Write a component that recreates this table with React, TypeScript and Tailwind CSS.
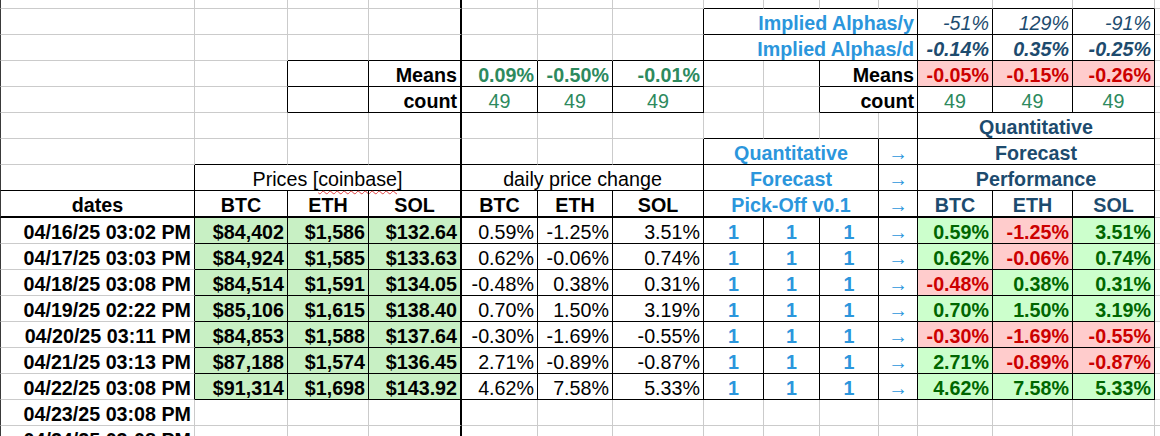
import React from "react";

type Cell = { c: number; cs?: number; t?: React.ReactNode; k?: string; a?: "l" | "c" | "r" };

const SPAN: Record<number, string> = { 1: "", 2: "col-span-2", 3: "col-span-3", 4: "col-span-4" };

const V: Record<number, [number, number][]> = {
  0: [[7, 15]],
  1: [[3, 4], [8, 15]],
  2: [[3, 4], [8, 15]],
  3: [[0, 17]],
  4: [[3, 4], [8, 15]],
  5: [[3, 4], [8, 15]],
  6: [[1, 4], [6, 15]],
  7: [[9, 15]],
  8: [[3, 4], [9, 15]],
  9: [[6, 15]],
  10: [[1, 15]],
  11: [[1, 4], [8, 15]],
  12: [[1, 4], [8, 15]],
  13: [[1, 15]],
};

const H: Record<number, [number, number][]> = {
  0: [[7, 13]],
  1: [[7, 13]],
  2: [[2, 13]],
  3: [[2, 6], [9, 13]],
  4: [[2, 6], [9, 13]],
  5: [[7, 13]],
  6: [[1, 13]],
  7: [[0, 13]],
  8: [[0, 13]],
  9: [[1, 13]],
  10: [[1, 13]],
  11: [[1, 13]],
  12: [[1, 13]],
  13: [[1, 13]],
  14: [[1, 13]],
  15: [[1, 13]],
};

const inR = (v: number, ranges?: [number, number][]) =>
  !!ranges && ranges.some(([a, b]) => v >= a && v <= b);

const BLUE = "text-[#2b96dc] font-bold";
const NAVY = "text-[#1d4b6e] font-bold";
const MGREEN = "text-[#2d8a5e]";
const ARROW = "text-[#2b96dc]";

const dates = [
  "04/16/25 03:02 PM",
  "04/17/25 03:03 PM",
  "04/18/25 03:08 PM",
  "04/19/25 02:22 PM",
  "04/20/25 03:11 PM",
  "04/21/25 03:13 PM",
  "04/22/25 03:08 PM",
];
const btc = ["$84,402", "$84,924", "$84,514", "$85,106", "$84,853", "$87,188", "$91,314"];
const eth = ["$1,586", "$1,585", "$1,591", "$1,615", "$1,588", "$1,574", "$1,698"];
const sol = ["$132.64", "$133.63", "$134.05", "$138.40", "$137.64", "$136.45", "$143.92"];
const dB = ["0.59%", "0.62%", "-0.48%", "0.70%", "-0.30%", "2.71%", "4.62%"];
const dE = ["-1.25%", "-0.06%", "0.38%", "1.50%", "-1.69%", "-0.89%", "7.58%"];
const dS = ["3.51%", "0.74%", "0.31%", "3.19%", "-0.55%", "-0.87%", "5.33%"];

const perf = (v: string) =>
  v.startsWith("-")
    ? "bg-[#ffcccc] text-[#cc0000] font-bold"
    : "bg-[#ccffcc] text-[#006600] font-bold";

const PRICE = "bg-[#c8f0c4] font-bold text-black";

const rowDefs: Record<number, Cell[]> = {
  1: [
    { c: 7, cs: 4, t: "Implied Alphas/y", k: BLUE, a: "r" },
    { c: 11, t: "-51%", k: "text-[#1d4b6e] italic", a: "r" },
    { c: 12, t: "129%", k: "text-[#1d4b6e] italic", a: "r" },
    { c: 13, t: "-91%", k: "text-[#1d4b6e] italic", a: "r" },
  ],
  2: [
    { c: 7, cs: 4, t: "Implied Alphas/d", k: BLUE, a: "r" },
    { c: 11, t: "-0.14%", k: "text-[#1d4b6e] italic font-bold", a: "r" },
    { c: 12, t: "0.35%", k: "text-[#1d4b6e] italic font-bold", a: "r" },
    { c: 13, t: "-0.25%", k: "text-[#1d4b6e] italic font-bold", a: "r" },
  ],
  3: [
    { c: 3, t: "Means", k: "font-bold text-black", a: "r" },
    { c: 4, t: "0.09%", k: MGREEN + " font-bold", a: "r" },
    { c: 5, t: "-0.50%", k: MGREEN + " font-bold", a: "r" },
    { c: 6, t: "-0.01%", k: MGREEN + " font-bold", a: "r" },
    { c: 9, cs: 2, t: "Means", k: "font-bold text-black", a: "r" },
    { c: 11, t: "-0.05%", k: perf("-"), a: "r" },
    { c: 12, t: "-0.15%", k: perf("-"), a: "r" },
    { c: 13, t: "-0.26%", k: perf("-"), a: "r" },
  ],
  4: [
    { c: 3, t: "count", k: "font-bold text-black", a: "r" },
    { c: 4, t: "49", k: MGREEN, a: "c" },
    { c: 5, t: "49", k: MGREEN, a: "c" },
    { c: 6, t: "49", k: MGREEN, a: "c" },
    { c: 9, cs: 2, t: "count", k: "font-bold text-black", a: "r" },
    { c: 11, t: "49", k: MGREEN, a: "c" },
    { c: 12, t: "49", k: MGREEN, a: "c" },
    { c: 13, t: "49", k: MGREEN, a: "c" },
  ],
  5: [{ c: 11, cs: 3, t: "Quantitative", k: NAVY, a: "c" }],
  6: [
    { c: 7, cs: 3, t: "Quantitative", k: BLUE, a: "c" },
    { c: 10, t: "→", k: ARROW, a: "c" },
    { c: 11, cs: 3, t: "Forecast", k: NAVY, a: "c" },
  ],
  7: [
    {
      c: 1,
      cs: 3,
      t: (
        <>
          Prices [
          <span className="underline decoration-wavy decoration-[#e04040] decoration-[1px] underline-offset-[4px]">
            coinbase
          </span>
          ]
        </>
      ),
      k: "text-black",
      a: "c",
    },
    { c: 4, cs: 3, t: "daily price change", k: "text-black", a: "c" },
    { c: 7, cs: 3, t: "Forecast", k: BLUE, a: "c" },
    { c: 10, t: "→", k: ARROW, a: "c" },
    { c: 11, cs: 3, t: "Performance", k: NAVY, a: "c" },
  ],
  8: [
    { c: 0, t: "dates", k: "font-bold text-black", a: "c" },
    { c: 1, t: "BTC", k: "font-bold text-black", a: "c" },
    { c: 2, t: "ETH", k: "font-bold text-black", a: "c" },
    { c: 3, t: "SOL", k: "font-bold text-black", a: "c" },
    { c: 4, t: "BTC", k: "font-bold text-black", a: "c" },
    { c: 5, t: "ETH", k: "font-bold text-black", a: "c" },
    { c: 6, t: "SOL", k: "font-bold text-black", a: "c" },
    { c: 7, cs: 3, t: "Pick-Off v0.1", k: BLUE, a: "c" },
    { c: 10, t: "→", k: ARROW, a: "c" },
    { c: 11, t: "BTC", k: NAVY, a: "c" },
    { c: 12, t: "ETH", k: NAVY, a: "c" },
    { c: 13, t: "SOL", k: NAVY, a: "c" },
  ],
  16: [{ c: 0, t: "04/23/25 03:08 PM", k: "font-bold text-black", a: "r" }],
  17: [{ c: 0, t: "04/24/25 03:08 PM", k: "font-bold text-black", a: "r" }],
};

dates.forEach((d, i) => {
  rowDefs[9 + i] = [
    { c: 0, t: d, k: "font-bold text-black", a: "r" },
    { c: 1, t: btc[i], k: PRICE, a: "r" },
    { c: 2, t: eth[i], k: PRICE, a: "r" },
    { c: 3, t: sol[i], k: PRICE, a: "r" },
    { c: 4, t: dB[i], k: "text-black", a: "r" },
    { c: 5, t: dE[i], k: "text-black", a: "r" },
    { c: 6, t: dS[i], k: "text-black", a: "r" },
    { c: 7, t: "1", k: BLUE, a: "c" },
    { c: 8, t: "1", k: BLUE, a: "c" },
    { c: 9, t: "1", k: BLUE, a: "c" },
    { c: 10, t: "→", k: ARROW, a: "c" },
    { c: 11, t: dB[i], k: perf(dB[i]), a: "r" },
    { c: 12, t: dE[i], k: perf(dE[i]), a: "r" },
    { c: 13, t: dS[i], k: perf(dS[i]), a: "r" },
  ];
});

const NCOLS = 15;
const NROWS = 18;

function buildCells() {
  const out: React.ReactNode[] = [];
  for (let r = 0; r < NROWS; r++) {
    const defs = rowDefs[r] || [];
    let c = 0;
    while (c < NCOLS) {
      const d = defs.find((x) => x.c === c) || { c };
      const cs = d.cs || 1;
      const last = c + cs - 1;
      const rb = inR(r, V[last]);
      const bb = inR(c, H[r]);
      const rw = last === 3 ? "border-r-2" : "border-r";
      const bw = r === 8 && c <= 13 ? "border-b-2" : "border-b";
      const rc = rb ? "border-r-black" : "border-r-[#cbcbcb]";
      const bc = bb ? "border-b-black" : "border-b-[#cbcbcb]";
      const left = c === 0 ? "border-l border-l-[#3a3a3a]" : "";
      const just =
        d.a === "r" ? "justify-end" : d.a === "c" ? "justify-center" : "justify-start";
      out.push(
        <div
          key={`${r}-${c}`}
          className={`${SPAN[cs]} ${rw} ${bw} ${rc} ${bc} ${left} ${d.k || ""} flex items-end ${just} px-[3px] whitespace-nowrap overflow-visible min-w-0`}
        >
          {d.t}
        </div>
      );
      c += cs;
    }
  }
  return out;
}

export default function App() {
  return (
    <div className="w-[1160px] h-[436px] overflow-hidden bg-white">
      <div className="grid grid-cols-[195px_93px_81px_93px_76px_75px_91px_60px_56px_59px_39px_75px_80px_82px_60px] grid-rows-[9px_repeat(7,26px)_27px_repeat(9,26px)] font-['Liberation_Sans',Arial,sans-serif] text-[19.7px] leading-[22px] text-black">
        {buildCells()}
      </div>
    </div>
  );
}
